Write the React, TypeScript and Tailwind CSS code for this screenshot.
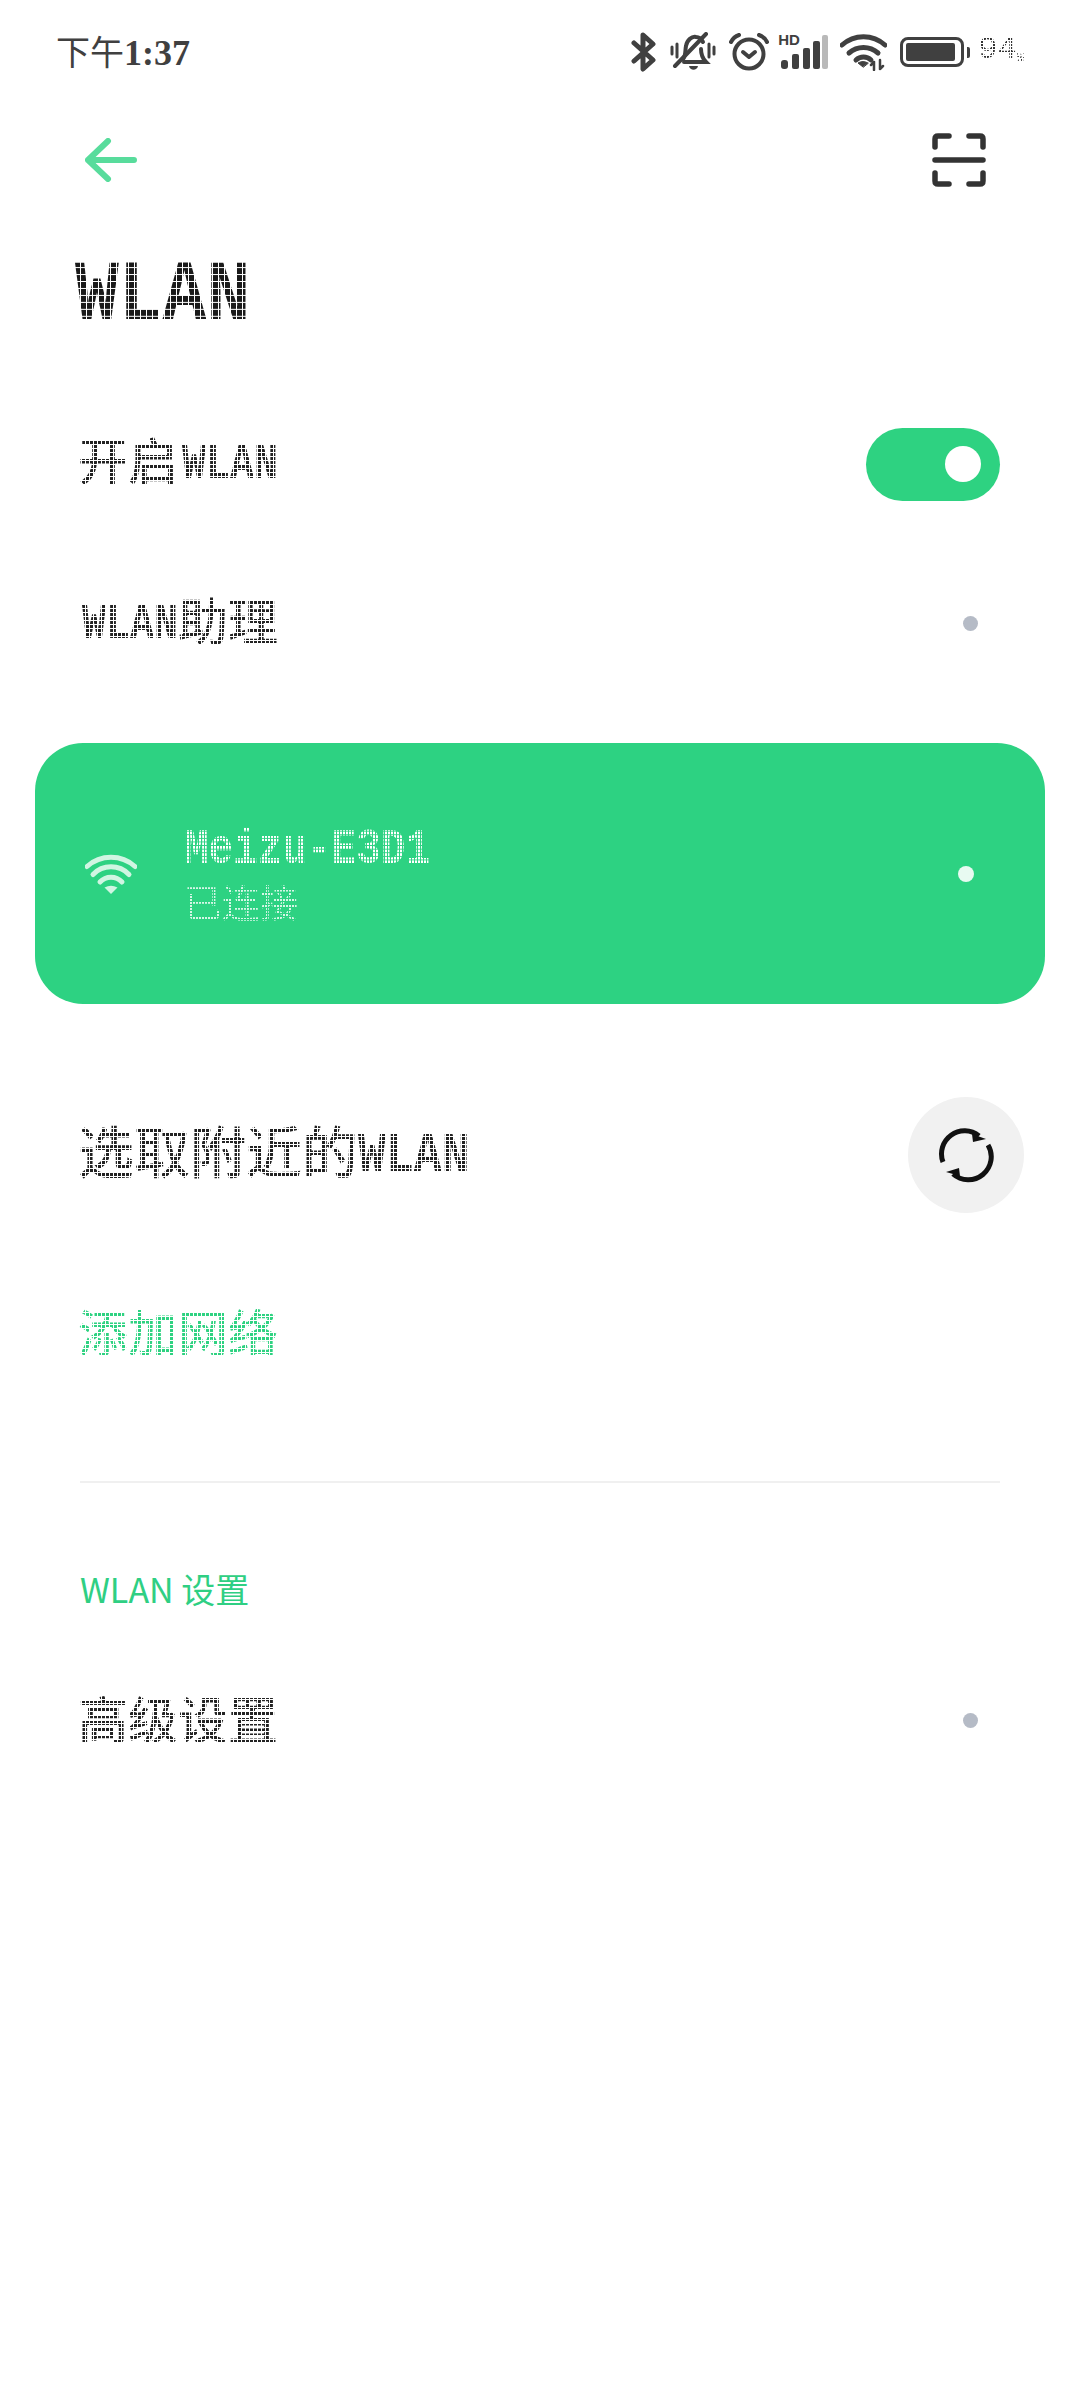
function Dot({ className }: { className: string }) {
  return <span className={"block rounded-full " + className} />;
}

// dot-matrix look: a square grid mask over ordinary text
const dots4 =
  "[mask-image:linear-gradient(to_right,black_80%,transparent_80%),linear-gradient(black_80%,transparent_80%)] [mask-size:4px_4px] [mask-composite:intersect]";
const dots6 =
  "[mask-image:linear-gradient(to_right,black_86%,transparent_86%),linear-gradient(black_86%,transparent_86%)] [mask-size:6px_6px] [mask-composite:intersect]";
const dots3 =
  "[mask-image:linear-gradient(to_right,black_72%,transparent_72%),linear-gradient(black_72%,transparent_72%)] [mask-size:3px_3px] [mask-composite:intersect]";

const cjk = "font-['Noto_Sans_CJK_SC',sans-serif]";
const mono = "font-['Liberation_Mono','Noto_Sans_CJK_SC',monospace]";

function Latin({ children }: { children: string }) {
  return (
    <span className={mono + " ml-[4px] inline-block origin-bottom scale-y-[1.25] text-[40px] leading-[40px] font-bold"}>
      {children}
    </span>
  );
}

function StatusIcons() {
  return (
    <div className="flex items-center">
      <svg width="26" height="40" viewBox="0 0 26 40" fill="none" stroke="#404040" strokeWidth="5" strokeLinecap="round" strokeLinejoin="round">
        <path d="M3 11 L22 28 L12 37 V3 L22 12 L3 29" />
      </svg>
      <svg className="ml-[13px]" width="46" height="40" viewBox="0 0 46 40" fill="none" stroke="#404040" strokeWidth="4" strokeLinecap="round">
        <path d="M2 15v7M7 12v13M39 12v13M44 15v7" strokeWidth="3" />
        <path d="M13 27 C16 24 15 18 16 14 C17 8 22 4 26 5 C30 5 32 8 33 10 M31 17 C31 24 33 27 36 30 H14" />
        <path d="M5 34 L36 2" />
        <path d="M19 34 H28 C27 39 20 39 19 34Z" fill="#404040" stroke="none" />
      </svg>
      <svg className="ml-[13px]" width="40" height="38" viewBox="0 0 40 38" fill="none" stroke="#404040" strokeWidth="4" strokeLinecap="round" strokeLinejoin="round">
        <circle cx="20" cy="21" r="14.5" />
        <path d="M14 19 L20 24 L26 19" />
        <path d="M2 9 C4 5 7 3 10 2 M38 9 C36 5 33 3 30 2" />
      </svg>
      <div className="relative ml-[9px] h-[38px] w-[50px]">
        <span className="absolute left-0 top-[-1px] font-['Liberation_Sans',sans-serif] text-[15px] leading-[15px] font-bold text-[#404040]">HD</span>
        <svg className="absolute inset-0" width="50" height="38" viewBox="0 0 50 38">
          <rect x="3" y="27" width="7" height="9" rx="3" fill="#404040" />
          <rect x="14" y="21" width="7" height="15" rx="2" fill="#404040" />
          <rect x="25" y="15" width="7" height="21" rx="2" fill="#404040" />
          <rect x="35" y="8" width="7" height="28" rx="2" fill="#404040" />
          <rect x="44" y="2" width="6" height="34" rx="2" fill="#b9b9b9" />
        </svg>
      </div>
      <svg className="ml-[12px]" width="47" height="38" viewBox="0 0 47 38" fill="none" stroke="#404040" strokeLinecap="round">
        <path d="M2 12 A32 32 0 0 1 45 12" strokeWidth="5" />
        <path d="M9 20 A22 22 0 0 1 38 20" strokeWidth="5" />
        <path d="M16 27 A11 11 0 0 1 31 27" strokeWidth="5" />
        <path d="M23 34 L18 30 Q23 27 28 30Z" fill="#404040" strokeWidth="1" />
        <path d="M34 37V29M31 32l3-3M40 27v9M40 36l3-3" strokeWidth="2.5" />
      </svg>
      <div className="ml-[13px] flex items-center">
        <div className="flex h-[30px] w-[64px] items-center rounded-[8px] border-[3.5px] border-[#404040] p-[3px]">
          <div className="h-full w-[94%] rounded-[2px] bg-[#404040]" />
        </div>
        <div className="ml-[3px] h-[11px] w-[3px] rounded-r-[2px] bg-[#404040]" />
      </div>
      <div className={"mb-[4px] ml-[8px] flex items-end " + mono + " text-[#333] " + dots3}>
        <span className="text-[32px] leading-[30px]">94</span>
        <span className="text-[14px] leading-[14px] tracking-[-1px]">%</span>
      </div>
    </div>
  );
}

function SyncIcon() {
  return (
    <svg width="56" height="56" viewBox="-28 -28 56 56" fill="none" stroke="#111" strokeWidth="5">
      <path d="M13 -19 A23 23 0 0 0 -23 7" />
      <path d="M22 -10 A23 23 0 0 1 -13 19" />
      <path d="M20 -16 L6 -21 L7 -13Z" fill="#111" stroke="none" />
      <path d="M-20 17 L-7 13 L-6 21Z" fill="#111" stroke="none" />
    </svg>
  );
}

export default function App() {
  return (
    <div className="flex h-[2400px] w-[1080px] flex-col overflow-hidden bg-white">
      <div className="flex h-[104px] shrink-0 items-center justify-between pl-[56px] pr-[56px]">
        <div className="flex items-baseline text-[#404040]">
          <span className="font-['Noto_Sans_CJK_SC',serif] text-[34px]">下午</span>
          <span className="font-['Liberation_Serif',serif] text-[36px] font-bold">1:37</span>
        </div>
        <StatusIcons />
      </div>

      <div className="flex h-[112px] shrink-0 items-center justify-between pl-[85px] pr-[94px]">
        <svg width="52" height="44" viewBox="0 0 52 44" fill="none" stroke="#58dc9c" strokeWidth="6" strokeLinecap="round" strokeLinejoin="round">
          <path d="M49 22 H3 M23 3 L3 22 L23 41" />
        </svg>
        <svg width="54" height="54" viewBox="0 0 54 54" fill="none" stroke="#333" strokeWidth="5.5" strokeLinejoin="round" strokeLinecap="round">
          <path d="M17 3 H6 Q3 3 3 6 V14 M37 3 H48 Q51 3 51 6 V14 M17 51 H6 Q3 51 3 48 V40 M37 51 H48 Q51 51 51 48 V40" />
          <path d="M3 27 H51" />
        </svg>
      </div>

      <div className="mt-[18px] flex h-[120px] shrink-0 items-center pl-[75px] text-[#1a1a1a]">
        <span className={mono + " mt-[5px] inline-block scale-y-[1.16] text-[73px] leading-none font-bold " + dots6}>WLAN</span>
      </div>

      <div className="mt-[40px] flex h-[140px] shrink-0 items-center justify-between pl-[78px] pr-[80px] text-[#222]">
        <div className={"mb-[6px] flex items-baseline " + cjk + " text-[50px] leading-none font-medium " + dots4}>
          开启<Latin>WLAN</Latin>
        </div>
        <div className="flex h-[73px] w-[134px] items-center justify-end rounded-full bg-[#2ed281] pr-[19px]">
          <Dot className="h-[36px] w-[36px] bg-white" />
        </div>
      </div>

      <div className="mt-[19px] flex h-[140px] shrink-0 items-center justify-between pl-[78px] pr-[102px] text-[#222]">
        <div className={"mb-[4px] flex items-baseline " + cjk + " text-[50px] leading-none font-medium " + dots4}>
          <Latin>WLAN</Latin>助理
        </div>
        <Dot className="h-[15px] w-[15px] bg-[#b5bbc6]" />
      </div>

      <div className="mx-[35px] mt-[50px] flex h-[261px] shrink-0 items-center justify-between rounded-[48px] bg-[#2dd282] pl-[50px] pr-[71px]">
        <div className="flex items-center">
          <svg width="52" height="40" viewBox="0 0 52 40" fill="none" stroke="#d0f5e2" strokeWidth="5" strokeLinecap="round">
            <path d="M2 12.5 A36 36 0 0 1 50 12.5" />
            <path d="M8 20.5 A25 25 0 0 1 44 20.5" />
            <path d="M15 28 A15 15 0 0 1 37 28" />
            <path d="M26 40 L19.5 33.5 Q26 30 32.5 33.5Z" fill="#d0f5e2" stroke="none" />
          </svg>
          <div className="ml-[47px] flex flex-col">
            <span className={mono + " mt-[3px] inline-block origin-bottom translate-y-[4px] scale-y-[1.2] text-[41px] leading-[54px] font-bold text-white " + dots3}>Meizu-E3D1</span>
            <span className={cjk + " mb-[3px] text-[38px] leading-[46px] text-white/80 " + dots3}>已连接</span>
          </div>
        </div>
        <Dot className="h-[16px] w-[16px] bg-[#e8faf1]" />
      </div>

      <div className="mt-[93px] flex h-[116px] shrink-0 items-center justify-between pl-[78px] pr-[56px] text-[#222]">
        <div className={"mb-[6px] flex items-baseline " + cjk + " text-[56px] leading-none font-medium " + dots4}>
          选取附近的<span className={mono + " inline-block origin-bottom scale-y-[1.2] text-[46.5px] leading-[46px] font-bold"}>WLAN</span>
        </div>
        <div className="flex h-[116px] w-[116px] items-center justify-center rounded-full bg-[#f1f1f1]">
          <SyncIcon />
        </div>
      </div>

      <div className="mt-[70px] flex h-[100px] shrink-0 items-center pl-[78px]">
        <span className={"mb-[6px] " + cjk + " text-[50px] leading-none font-medium text-[#2ed281] " + dots4}>添加网络</span>
      </div>

      <div className="mx-[80px] mt-[98px] h-[2px] shrink-0 bg-[#f0f0f0]" />

      <div className="mt-[77px] flex h-[60px] shrink-0 items-center pl-[80px]">
        <span className={"mb-[3px] " + cjk + " text-[34px] leading-none text-[#2fcf83]"}>WLAN 设置</span>
      </div>

      <div className="mt-[50px] flex h-[100px] shrink-0 items-center justify-between pl-[78px] pr-[102px] text-[#222]">
        <span className={"mb-[6px] " + cjk + " text-[50px] leading-none font-medium " + dots4}>高级设置</span>
        <Dot className="h-[15px] w-[15px] bg-[#b5bbc6]" />
      </div>
    </div>
  );
}
